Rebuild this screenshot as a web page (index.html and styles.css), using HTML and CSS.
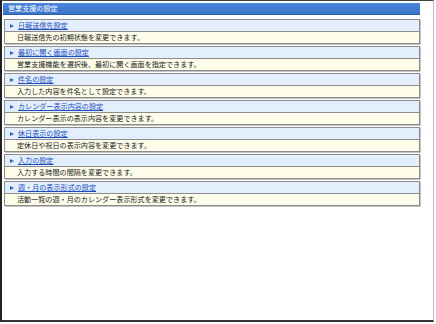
FILE: index.html
```html
<!DOCTYPE html>
<html lang="ja">
<head>
  <meta charset="UTF-8" />
  <title>営業支援の設定</title>
  <link rel="stylesheet" href="styles.css">
</head>
<body>
  <div class="frame">
    <div class="title">営業支援の設定</div>

    <div class="list">
      <div class="item">
        <div class="item-head"><span class="arrow"></span><a href="#">日報送信先設定</a></div>
        <div class="item-desc">日報送信先の初期状態を変更できます。</div>
      </div>
      <div class="item">
        <div class="item-head"><span class="arrow"></span><a href="#">最初に開く画面の設定</a></div>
        <div class="item-desc">営業支援機能を選択後、最初に開く画面を指定できます。</div>
      </div>
      <div class="item">
        <div class="item-head"><span class="arrow"></span><a href="#">件名の設定</a></div>
        <div class="item-desc">入力した内容を件名として設定できます。</div>
      </div>
      <div class="item">
        <div class="item-head"><span class="arrow"></span><a href="#">カレンダー表示内容の設定</a></div>
        <div class="item-desc">カレンダー表示の表示内容を変更できます。</div>
      </div>
      <div class="item">
        <div class="item-head"><span class="arrow"></span><a href="#">休日表示の設定</a></div>
        <div class="item-desc">定休日や祝日の表示内容を変更できます。</div>
      </div>
      <div class="item">
        <div class="item-head"><span class="arrow"></span><a href="#">入力の設定</a></div>
        <div class="item-desc">入力する時間の間隔を変更できます。</div>
      </div>
      <div class="item">
        <div class="item-head"><span class="arrow"></span><a href="#">週・月の表示形式の設定</a></div>
        <div class="item-desc">活動一覧の週・月のカレンダー表示形式を変更できます。</div>
      </div>
    </div>
  </div>
</body>
</html>
```

FILE: styles.css
```css
* {
  box-sizing: border-box;
}

body {
  margin: 0;
  background: #fff;
  font-family: "Noto Sans CJK JP", "Noto Sans", sans-serif;
  font-size: 7.1px;
  color: #222;
}

.frame {
  width: 434px;
  height: 322px;
  border-top: 1px solid #444;
  border-left: 2px solid #222;
  border-right: 1px solid #bbb;
  border-bottom: 2px solid #333;
  padding: 2px 13px 0 1px;
}

.title {
  height: 12px;
  line-height: 11px;
  padding-left: 5px;
  color: #fff;
  background: linear-gradient(#4a86da, #3a74cc);
  border-bottom: 1px solid #2d5fae;
}

.list {
  padding-top: 4px;
  padding-left: 1px;
}

.item {
  margin-bottom: 2px;
  border: 1px solid #8c8c8c;
  box-shadow: 1px 1px 0 #c4c4c4;
}

.item-head {
  height: 12px;
  line-height: 11px;
  padding-left: 5px;
  background: #e3effc;
  border-bottom: 1px solid #8c8c8c;
  display: flex;
  align-items: center;
}

.arrow {
  width: 0;
  height: 0;
  border-left: 4px solid #2a62c4;
  border-top: 2.5px solid transparent;
  border-bottom: 2.5px solid transparent;
  margin-right: 4px;
}

.item-head a {
  color: #1d4fc2;
  text-decoration: underline;
}

.item-desc {
  height: 11px;
  line-height: 11px;
  padding-left: 12px;
  background: #fdfdea;
}
```
